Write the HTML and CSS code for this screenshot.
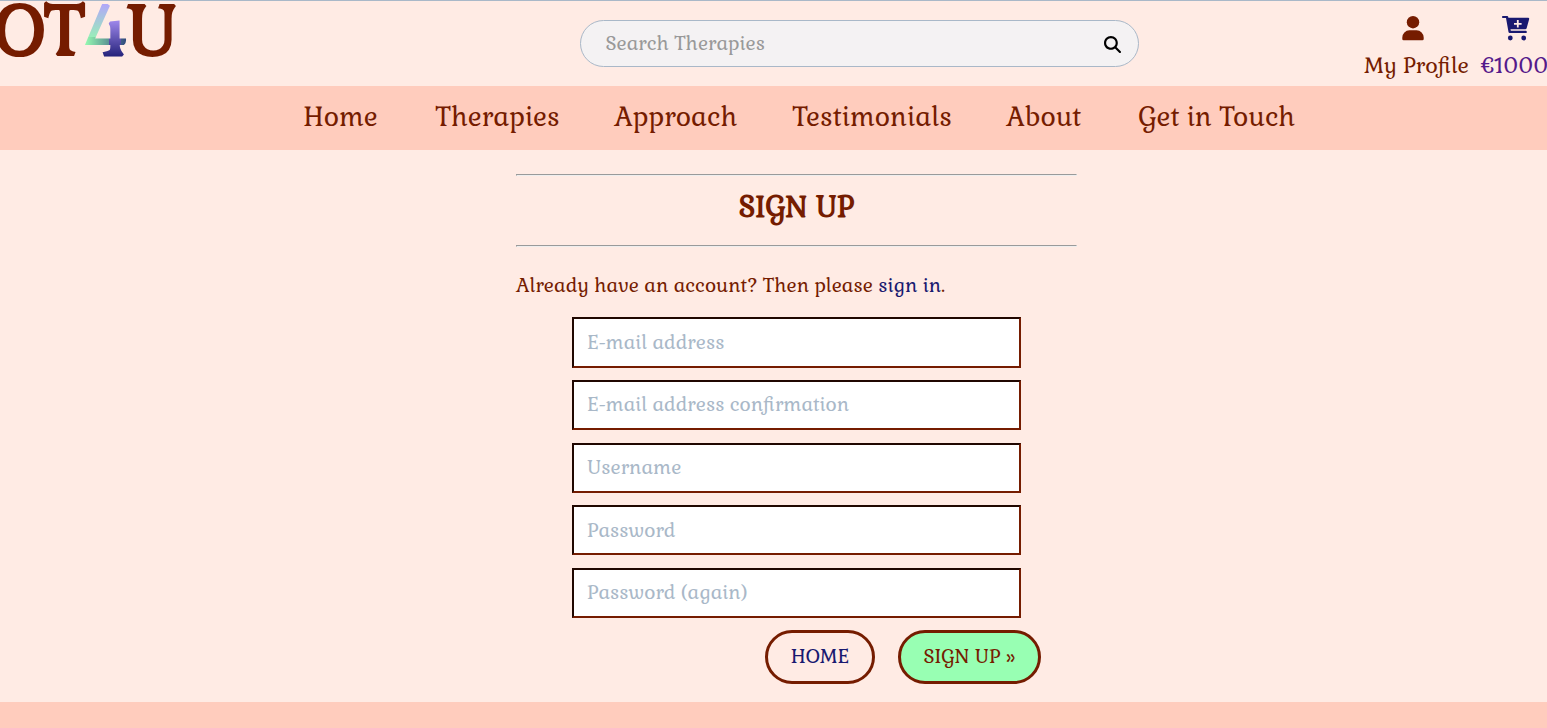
FILE: index.html
```html
<!DOCTYPE html>
<html lang="en">
<head>
<meta charset="utf-8">
<title>Sign Up</title>
<link rel="stylesheet" href="styles.css">
</head>
<body>
<header class="header">
  <a class="logo" href="#">
    <svg width="180" height="70" viewBox="0 0 180 70">
      <defs>
        <linearGradient id="slope" x1="0" y1="0" x2="0" y2="1"><stop offset="0" stop-color="#b5a0ff"/><stop offset="1" stop-color="#98efb8"/></linearGradient>
        <linearGradient id="bar" x1="0" y1="0" x2="1" y2="0"><stop offset="0" stop-color="#98ffb3"/><stop offset="1" stop-color="#283878"/></linearGradient>
        <linearGradient id="stem" x1="0" y1="0" x2="0" y2="1"><stop offset="0" stop-color="#a48cf0"/><stop offset="1" stop-color="#191970"/></linearGradient>
        <pattern id="four" patternUnits="userSpaceOnUse" x="84" y="0" width="46" height="60">
          <rect width="46" height="37" y="0" fill="url(#slope)"/>
          <rect width="46" height="8" y="36" fill="url(#bar)"/>
          <path d="M25 18h12v26h5v15H18V44h7z" fill="url(#stem)"/>
        </pattern>
      </defs>
      <g class="logo-text">
        <text x="-6" y="53.500">O</text>
        <text x="43.800" y="53.500">T</text>
        <text x="84.500" y="53.500" fill="url(#four)">4</text>
        <text x="126.300" y="53.500">U</text>
      </g>
    </svg>
  </a>
  <form class="search">
    <input class="search-input" type="text" placeholder="Search Therapies">
    <svg class="search-icon" width="17" height="17" viewBox="0 0 512 512"><path d="M416 208c0 45.900-14.900 88.300-40 122.700L502.600 457.400c12.500 12.500 12.500 32.800 0 45.300s-32.800 12.500-45.300 0L330.700 376c-34.400 25.200-76.800 40-122.700 40C93.100 416 0 322.900 0 208S93.100 0 208 0S416 93.100 416 208zM208 352a144 144 0 1 0 0-288 144 144 0 1 0 0 288z"/></svg>
  </form>
  <div class="account">
    <a class="profile" href="#">
      <svg width="22" height="25" viewBox="0 0 22 25" fill="currentColor"><circle cx="11" cy="6.200" r="6.200"/><path d="M7.500 14.300h7a7.200 7.200 0 0 1 7.200 7.300v1.300q0 1.300-1.300 1.300H1.600q-1.300 0-1.300-1.300v-1.300a7.200 7.200 0 0 1 7.200-7.300z"/></svg>
      <span>My Profile</span>
    </a>
    <a class="cart" href="#">
      <svg width="28" height="25" viewBox="0 0 28 25"><path fill="#191970" d="M.8 0h4.400q.8 0 1 .8l.2 1h19.800q1.200 0 1 1.200L24.700 12q-.3 1.300-1.500 1.300H8.500l.3 1.400h15q1 0 1 1.200t-1 1.200H7.700q-1 0-1.200-1L4 2H.8Q0 2 0 1t.8-1z"/><circle cx="8.300" cy="22" r="2.400" fill="#191970"/><circle cx="21.700" cy="22" r="2.400" fill="#191970"/><path d="M15.800 4v7.600M12 7.800h7.600" stroke="#ffebe4" stroke-width="1.800"/></svg>
      <span>€1000</span>
    </a>
  </div>
</header>
<nav class="nav">
  <a class="nav-home" href="#">Home</a>
  <a class="nav-therapies" href="#">Therapies</a>
  <a class="nav-approach" href="#">Approach</a>
  <a class="nav-testimonials" href="#">Testimonials</a>
  <a class="nav-about" href="#">About</a>
  <a class="nav-contact" href="#">Get in Touch</a>
</nav>
<main class="signup">
  <hr>
  <h1>SIGN UP</h1>
  <hr>
  <p>Already have an account? Then please <a href="#">sign in</a>.</p>
  <form class="fields">
    <input type="email" placeholder="E-mail address">
    <input type="email" placeholder="E-mail address confirmation">
    <input type="text" placeholder="Username">
    <input type="password" placeholder="Password">
    <input type="password" placeholder="Password (again)">
  </form>
  <div class="actions">
    <a class="button" href="#">HOME</a>
    <button class="button button-primary" type="submit">SIGN UP »</button>
  </div>
</main>
<footer class="footer"></footer>
</body>
</html>
```
FILE: styles.css
```css
* { box-sizing: border-box; }
html, body { height: 728px; overflow: hidden; }
body {
  margin: 0;
  display: flex;
  flex-direction: column;
  background: #ffebe4;
  color: #751c00;
  font-family: "Gabriela", "Liberation Serif", serif;
  font-size: 19.250px;
}
a { color: inherit; text-decoration: none; }
input, button { font: inherit; color: inherit; }
.header {
  height: 86px;
  flex: none;
  border-top: 1px solid #a9b8c8;
  display: flex;
  align-items: flex-start;
}
.logo { width: 180px; margin-right: 400px; flex: none; }
.logo svg { display: block; }
.logo-text { font: bold 70px "Gabriela", "Liberation Serif", serif; fill: #751c00; }
.search {
  width: 559px;
  flex: none;
  height: 47px;
  margin-top: 19px;
  padding: 0 17px 0 24.500px;
  display: flex;
  align-items: center;
  border: 1px solid #a9b8c8;
  border-radius: 24px;
  background: #f4f2f3;
}
.search-input { flex: 1; padding: 0; border: 0; background: transparent; outline: 0; }
.search-input::placeholder { color: #999; opacity: 1; }
.search-icon { margin-top: 2px; }
.account { display: flex; flex: none; margin-left: 225px; gap: 12px; font-size: 21.600px; white-space: nowrap; }
.profile, .cart { display: flex; flex-direction: column; padding-top: 15px; line-height: 28px; gap: 11px; }
.profile { width: 105px; align-items: center; }
.profile svg { margin-right: 7px; }
.cart { color: #551a8b; }
.cart svg { margin-left: 21px; }
.nav {
  height: 64px;
  flex: none;
  display: flex;
  padding-left: 303.200px;
  background: #ffccbd;
  font-size: 26.400px;
  line-height: 62px;
  white-space: nowrap;
}
.nav-home { width: 132px; }
.nav-therapies { width: 179px; }
.nav-approach { width: 178px; }
.nav-testimonials { width: 214px; }
.nav-about { width: 132px; }
.nav-contact { width: 160px; }
.signup { width: 561px; height: 552px; flex: none; margin-left: 516px; padding-top: 24px; }
.signup hr { margin: 0; }
.signup h1 {
  margin: 0;
  height: 69px;
  font-size: 28.800px;
  line-height: 62px;
  text-align: center;
}
.signup p { margin: 26px 0 19.400px; line-height: 25px; white-space: nowrap; }
.signup p a { color: #191970; }
.fields { display: flex; flex-direction: column; gap: 12.450px; padding: 0 56px; }
.fields input {
  width: 449px;
  height: 50.200px;
  padding: 0 13px .600px;
  border: 2px inset #751c00;
  background: #fff;
}
.fields input::placeholder { color: #a9b8c8; opacity: 1; }
.actions { display: flex; justify-content: flex-end; gap: 23px; margin-top: 11.800px; padding-right: 36px; }
.button {
  width: 110px;
  height: 54px;
  padding: 0;
  border: 3px solid #751c00;
  border-radius: 27px;
  color: #191970;
  background: transparent;
  line-height: 47px;
  text-align: center;
}
.button-primary { width: 143px; padding-bottom: 2px; color: #751c00; background: #98ffb3; }
.footer { flex: 1; background: #ffccbd; }
```
